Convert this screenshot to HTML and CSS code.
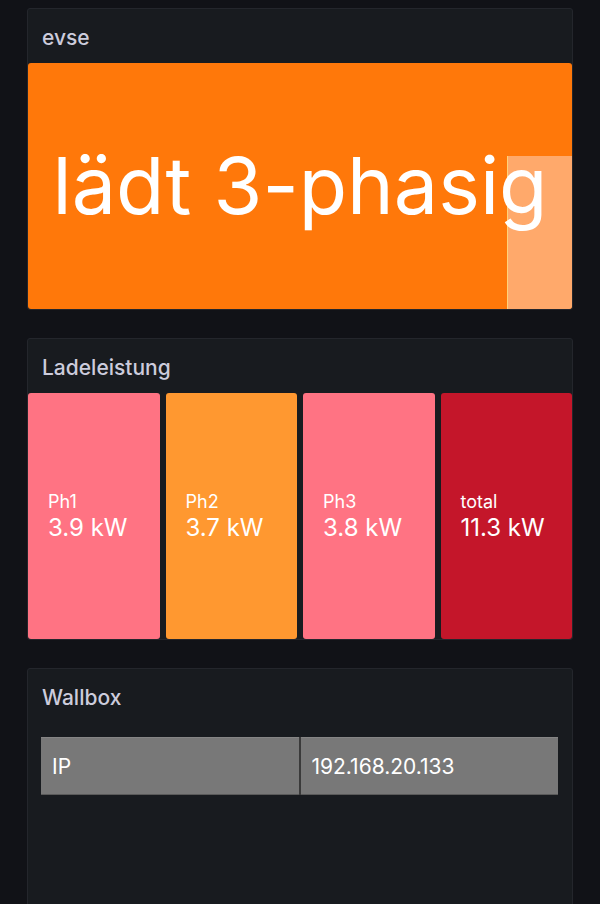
FILE: index.html
```html
<!DOCTYPE html>
<html lang="de">
<head>
<meta charset="utf-8">
<title>Wallbox</title>
<link rel="stylesheet" href="styles.css">
</head>
<body>
<div class="dash">
  <section class="panel">
    <div class="panel-header">evse</div>
    <div class="state">
      <div class="spark"></div>
      <div class="state-text">lädt 3-phasig</div>
    </div>
  </section>

  <section class="panel">
    <div class="panel-header">Ladeleistung</div>
    <div class="stats">
      <div class="stat stat-red"><div class="stat-label">Ph1</div><div class="stat-value">3.9 kW</div></div>
      <div class="stat stat-orange"><div class="stat-label">Ph2</div><div class="stat-value">3.7 kW</div></div>
      <div class="stat stat-red"><div class="stat-label">Ph3</div><div class="stat-value">3.8 kW</div></div>
      <div class="stat stat-dark"><div class="stat-label">total</div><div class="stat-value">11.3 kW</div></div>
    </div>
  </section>

  <section class="panel panel-tall">
    <div class="panel-header">Wallbox</div>
    <div class="table-wrap">
      <div class="row">
        <div class="cell">IP</div>
        <div class="cell">192.168.20.133</div>
      </div>
    </div>
  </section>
</div>
</body>
</html>
```

FILE: styles.css
```css
html, body {
  margin: 0;
  padding: 0;
  background: #111217;
  font-family: Inter, "Noto Sans", sans-serif;
  overflow: hidden;
}

.dash {
  padding: 8px 27px 0 27px;
  display: flex;
  flex-direction: column;
  gap: 28px;
}

.panel {
  background: #181b1f;
  border: 1px solid #24262c;
  border-radius: 3px;
  display: flex;
  flex-direction: column;
}

.panel-header {
  height: 54px;
  padding: 2px 14px 0 14px;
  display: flex;
  align-items: center;
  font-size: 21px;
  font-weight: 500;
  color: #ccccdc;
  box-sizing: border-box;
}

.state {
  position: relative;
  height: 246px;
  background: #ff780a;
  border-radius: 3px;
  display: flex;
  align-items: center;
  justify-content: center;
  overflow: hidden;
}

.spark {
  position: absolute;
  left: 479px;
  top: 93px;
  right: 0;
  bottom: 0;
  background: #ffa96b;
  border-left: 1px solid #ffd27a;
}

.state-text {
  position: relative;
  font-size: 79px;
  font-weight: 400;
  color: #ffffff;
  line-height: 1;
  margin-top: -1px;
}

.stats {
  display: grid;
  grid-template-columns: repeat(4, 1fr);
  gap: 6px;
}

.stat {
  height: 246px;
  border-radius: 3px;
  padding: 0 20px;
  display: flex;
  flex-direction: column;
  justify-content: center;
  color: #ffffff;
}

.stat-red { background: #ff7383; }
.stat-orange { background: #ff9830; }
.stat-dark { background: #c4162a; }

.stat-label {
  font-size: 18px;
  line-height: 22px;
  font-weight: 400;
  margin-top: 2px;
}

.stat-value {
  font-size: 24px;
  line-height: 30px;
  font-weight: 400;
}

.panel-tall {
  height: 400px;
}

.table-wrap {
  padding: 14px 14px 0 13px;
}

.row {
  display: grid;
  grid-template-columns: 1fr 1fr;
  gap: 2px;
  background: #3a3a3a;
}

.cell {
  height: 58px;
  box-sizing: border-box;
  padding: 0 11px;
  display: flex;
  align-items: center;
  background: #787878;
  border-top: 1px solid #858585;
  border-bottom: 1px solid #5a5a5a;
  color: #ffffff;
  font-size: 21px;
  font-weight: 400;
}
```
